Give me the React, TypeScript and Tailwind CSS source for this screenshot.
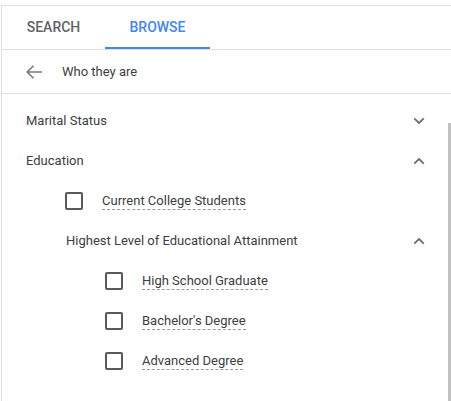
import React from "react";

const ChevronDown = () => (
  <svg width="12" height="8" viewBox="0 0 12 8" className="block">
    <path d="M1.2 1.4 L6 6 L10.8 1.4" fill="none" stroke="#6f6f6f" strokeWidth="1.8" />
  </svg>
);

const ChevronUp = () => (
  <svg width="12" height="8" viewBox="0 0 12 8" className="block">
    <path d="M1.2 6.6 L6 2 L10.8 6.6" fill="none" stroke="#6f6f6f" strokeWidth="1.8" />
  </svg>
);

const BackArrow = () => (
  <svg width="18" height="16" viewBox="0 0 18 16" className="block">
    <path d="M17 8 H2.5 M8.5 1.8 L2.2 8 L8.5 14.2" fill="none" stroke="#7a7a7a" strokeWidth="1.6" />
  </svg>
);

const Check = ({ label }: { label: string }) => (
  <div className="flex h-10 items-center">
    <span className="mr-[19px] h-[18px] w-[18px] shrink-0 rounded-[2px] border-2 border-[#5a5a5a]" />
    <span className="border-b border-dashed border-[#9a9a9a] pb-px text-[13px] leading-[15px] text-[#3c4043]">
      {label}
    </span>
  </div>
);

const Section = ({ title, open, className = "" }: { title: string; open: boolean; className?: string }) => (
  <div className={`flex h-10 items-center justify-between pr-[26px] ${className}`}>
    <span className="text-[13px] text-[#3c4043]">{title}</span>
    {open ? <ChevronUp /> : <ChevronDown />}
  </div>
);

export default function App() {
  return (
    <div
      className="relative h-[401px] w-[451px] overflow-hidden bg-white pl-px pt-[5px]"
      style={{ fontFamily: "Roboto, 'Liberation Sans', sans-serif" }}
    >
      <div className="h-[396px] border-l border-t border-[#e0e0e0]">
        {/* tabs */}
        <div className="flex h-[44px] border-b border-[#e0e0e0]">
          <div className="flex w-[103px] items-center justify-center text-[14px] font-medium text-[#5f6368]">
            SEARCH
          </div>
          <div className="relative flex w-[105px] items-center justify-center text-[14px] font-medium text-[#4285f4]">
            BROWSE
            <span className="absolute bottom-0 left-0 right-0 h-[2px] bg-[#4285f4]" />
          </div>
        </div>

        {/* breadcrumb */}
        <div className="flex h-[44px] items-center border-b border-[#e0e0e0] pl-[23px]">
          <BackArrow />
          <span className="ml-[19px] text-[13px] text-[#3c4043]">Who they are</span>
        </div>

        {/* filter tree */}
        <div className="pl-[24px] pt-[7px]">
          <Section title="Marital Status" open={false} />
          <Section title="Education" open />
          <div className="pl-[39px]">
            <Check label="Current College Students" />
          </div>
          <Section title="Highest Level of Educational Attainment" open className="pl-[40px]" />
          <div className="pl-[79px]">
            <Check label="High School Graduate" />
            <Check label="Bachelor's Degree" />
            <Check label="Advanced Degree" />
          </div>
        </div>
      </div>

      {/* scrollbar thumb */}
      <div className="absolute right-0 top-[123px] h-[278px] w-[3px] bg-[#c1c1c1]" />
    </div>
  );
}
